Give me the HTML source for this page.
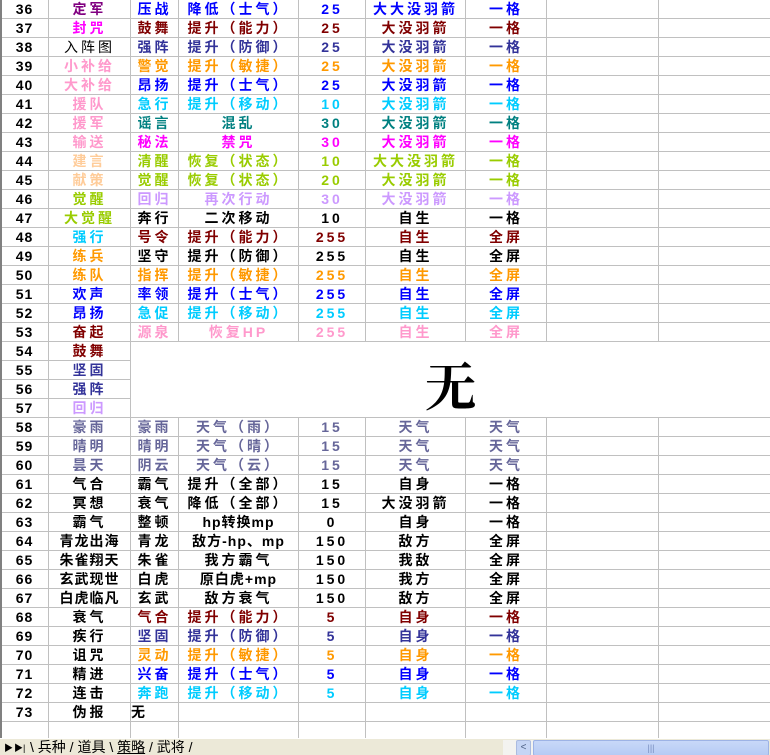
<!DOCTYPE html>
<html><head><meta charset="utf-8">
<style>
html,body{margin:0;padding:0;width:770px;height:755px;overflow:hidden;background:#fff;}
body{position:relative;font-family:"Liberation Sans","Noto Sans CJK SC",sans-serif;}
table{position:absolute;left:0;top:-1px;border-collapse:collapse;table-layout:fixed;width:770px;}
td{border:1px solid #c0c0c0;height:18px;padding:0;text-align:center;font-weight:bold;font-size:14px;line-height:18px;white-space:nowrap;overflow:hidden;letter-spacing:3px;}
td.n{letter-spacing:1px;color:#000;}
.pu{color:#800080}.mg{color:#ff00ff}.k{color:#000}.nv{color:#333399}.pk{color:#ff99cc}.or{color:#ff9900}.bl{color:#0000ff}.cy{color:#00ccff}.tl{color:#008080}.gr{color:#99cc00}.pe{color:#ffcc99}.lv{color:#cc99ff}.dr{color:#800000}.wg{color:#666699}
.big{font-size:52px;font-weight:bold;color:#000;letter-spacing:0;font-family:"Noto Serif CJK SC","Liberation Serif",serif;padding-top:8px;}
#lb{position:absolute;left:0;top:0;width:2px;height:738px;background:#808080;}
#tabs{position:absolute;left:0;top:738px;width:770px;height:17px;background:#ece9d8;border-top:1px solid #fff;font-size:14px;}
#tabs span{position:absolute;top:-2px;}
#sb{position:absolute;left:503px;top:740px;width:266px;height:15px;background:#f3f3f0;}
#sbl{position:absolute;left:13px;top:0;width:13px;height:14px;background:#c5d5f5;border:1px solid #aabbe0;border-radius:2px;color:#4d6185;font-size:10px;line-height:14px;text-align:center;}
#sbt{position:absolute;left:30px;top:0;width:234px;height:14px;background:linear-gradient(#c8d8f8,#b6cbf4);border:1px solid #9db3e5;border-radius:2px;color:#7a8fc0;font-size:9px;text-align:center;line-height:14px;}
</style></head><body>
<table>
<colgroup><col style="width:48px"><col style="width:82px"><col style="width:48px"><col style="width:120px"><col style="width:67px"><col style="width:100px"><col style="width:81px"><col style="width:112px"><col style="width:112px"></colgroup>
<tr><td class="n">36</td><td class="pu">定军</td><td class="bl">压战</td><td class="bl">降低（士气）</td><td class="bl">25</td><td class="bl">大大没羽箭</td><td class="bl">一格</td><td></td><td></td></tr>
<tr><td class="n">37</td><td class="mg">封咒</td><td class="dr">鼓舞</td><td class="dr">提升（能力）</td><td class="dr">25</td><td class="dr">大没羽箭</td><td class="dr">一格</td><td></td><td></td></tr>
<tr><td class="n">38</td><td class="k" style="font-weight:normal">入阵图</td><td class="nv">强阵</td><td class="nv">提升（防御）</td><td class="nv">25</td><td class="nv">大没羽箭</td><td class="nv">一格</td><td></td><td></td></tr>
<tr><td class="n">39</td><td class="pk">小补给</td><td class="or">警觉</td><td class="or">提升（敏捷）</td><td class="or">25</td><td class="or">大没羽箭</td><td class="or">一格</td><td></td><td></td></tr>
<tr><td class="n">40</td><td class="pk">大补给</td><td class="bl">昂扬</td><td class="bl">提升（士气）</td><td class="bl">25</td><td class="bl">大没羽箭</td><td class="bl">一格</td><td></td><td></td></tr>
<tr><td class="n">41</td><td class="pk">援队</td><td class="cy">急行</td><td class="cy">提升（移动）</td><td class="cy">10</td><td class="cy">大没羽箭</td><td class="cy">一格</td><td></td><td></td></tr>
<tr><td class="n">42</td><td class="pk">援军</td><td class="tl">谣言</td><td class="tl">混乱</td><td class="tl">30</td><td class="tl">大没羽箭</td><td class="tl">一格</td><td></td><td></td></tr>
<tr><td class="n">43</td><td class="pk">输送</td><td class="mg">秘法</td><td class="mg">禁咒</td><td class="mg">30</td><td class="mg">大没羽箭</td><td class="mg">一格</td><td></td><td></td></tr>
<tr><td class="n">44</td><td class="pe">建言</td><td class="gr">清醒</td><td class="gr">恢复（状态）</td><td class="gr">10</td><td class="gr">大大没羽箭</td><td class="gr">一格</td><td></td><td></td></tr>
<tr><td class="n">45</td><td class="pe">献策</td><td class="gr">觉醒</td><td class="gr">恢复（状态）</td><td class="gr">20</td><td class="gr">大没羽箭</td><td class="gr">一格</td><td></td><td></td></tr>
<tr><td class="n">46</td><td class="gr">觉醒</td><td class="lv">回归</td><td class="lv">再次行动</td><td class="lv">30</td><td class="lv">大没羽箭</td><td class="lv">一格</td><td></td><td></td></tr>
<tr><td class="n">47</td><td class="gr">大觉醒</td><td class="k">奔行</td><td class="k">二次移动</td><td class="k">10</td><td class="k">自生</td><td class="k">一格</td><td></td><td></td></tr>
<tr><td class="n">48</td><td class="cy">强行</td><td class="dr">号令</td><td class="dr">提升（能力）</td><td class="dr">255</td><td class="dr">自生</td><td class="dr">全屏</td><td></td><td></td></tr>
<tr><td class="n">49</td><td class="or">练兵</td><td class="k">坚守</td><td class="k">提升（防御）</td><td class="k">255</td><td class="k">自生</td><td class="k">全屏</td><td></td><td></td></tr>
<tr><td class="n">50</td><td class="or">练队</td><td class="or">指挥</td><td class="or">提升（敏捷）</td><td class="or">255</td><td class="or">自生</td><td class="or">全屏</td><td></td><td></td></tr>
<tr><td class="n">51</td><td class="bl">欢声</td><td class="bl">率领</td><td class="bl">提升（士气）</td><td class="bl">255</td><td class="bl">自生</td><td class="bl">全屏</td><td></td><td></td></tr>
<tr><td class="n">52</td><td class="bl">昂扬</td><td class="cy">急促</td><td class="cy">提升（移动）</td><td class="cy">255</td><td class="cy">自生</td><td class="cy">全屏</td><td></td><td></td></tr>
<tr><td class="n">53</td><td class="dr">奋起</td><td class="pk">源泉</td><td class="pk">恢复HP</td><td class="pk">255</td><td class="pk">自生</td><td class="pk">全屏</td><td></td><td></td></tr>
<tr><td class="n">54</td><td class="dr">鼓舞</td><td colspan="7" rowspan="4" class="big">无</td></tr>
<tr><td class="n">55</td><td class="nv">坚固</td></tr>
<tr><td class="n">56</td><td class="nv">强阵</td></tr>
<tr><td class="n">57</td><td class="lv">回归</td></tr>
<tr><td class="n">58</td><td class="wg">豪雨</td><td class="wg">豪雨</td><td class="wg">天气（雨）</td><td class="wg">15</td><td class="wg">天气</td><td class="wg">天气</td><td></td><td></td></tr>
<tr><td class="n">59</td><td class="wg">晴明</td><td class="wg">晴明</td><td class="wg">天气（晴）</td><td class="wg">15</td><td class="wg">天气</td><td class="wg">天气</td><td></td><td></td></tr>
<tr><td class="n">60</td><td class="wg">昙天</td><td class="wg">阴云</td><td class="wg">天气（云）</td><td class="wg">15</td><td class="wg">天气</td><td class="wg">天气</td><td></td><td></td></tr>
<tr><td class="n">61</td><td class="k">气合</td><td class="k">霸气</td><td class="k">提升（全部）</td><td class="k">15</td><td class="k">自身</td><td class="k">一格</td><td></td><td></td></tr>
<tr><td class="n">62</td><td class="k">冥想</td><td class="k">衰气</td><td class="k">降低（全部）</td><td class="k">15</td><td class="k">大没羽箭</td><td class="k">一格</td><td></td><td></td></tr>
<tr><td class="n">63</td><td class="k">霸气</td><td class="k">整顿</td><td class="k" style="letter-spacing:1px">hp转换mp</td><td class="k">0</td><td class="k">自身</td><td class="k">一格</td><td></td><td></td></tr>
<tr><td class="n">64</td><td class="k" style="letter-spacing:1px">青龙出海</td><td class="k">青龙</td><td class="k" style="letter-spacing:1px">敌方-hp、mp</td><td class="k">150</td><td class="k">敌方</td><td class="k">全屏</td><td></td><td></td></tr>
<tr><td class="n">65</td><td class="k" style="letter-spacing:1px">朱雀翔天</td><td class="k">朱雀</td><td class="k">我方霸气</td><td class="k">150</td><td class="k">我敌</td><td class="k">全屏</td><td></td><td></td></tr>
<tr><td class="n">66</td><td class="k" style="letter-spacing:1px">玄武现世</td><td class="k">白虎</td><td class="k" style="letter-spacing:1px">原白虎+mp</td><td class="k">150</td><td class="k">我方</td><td class="k">全屏</td><td></td><td></td></tr>
<tr><td class="n">67</td><td class="k" style="letter-spacing:1px">白虎临凡</td><td class="k">玄武</td><td class="k">敌方衰气</td><td class="k">150</td><td class="k">敌方</td><td class="k">全屏</td><td></td><td></td></tr>
<tr><td class="n">68</td><td class="k">衰气</td><td class="dr">气合</td><td class="dr">提升（能力）</td><td class="dr">5</td><td class="dr">自身</td><td class="dr">一格</td><td></td><td></td></tr>
<tr><td class="n">69</td><td class="k">疾行</td><td class="nv">坚固</td><td class="nv">提升（防御）</td><td class="nv">5</td><td class="nv">自身</td><td class="nv">一格</td><td></td><td></td></tr>
<tr><td class="n">70</td><td class="k">诅咒</td><td class="or">灵动</td><td class="or">提升（敏捷）</td><td class="or">5</td><td class="or">自身</td><td class="or">一格</td><td></td><td></td></tr>
<tr><td class="n">71</td><td class="k">精进</td><td class="bl">兴奋</td><td class="bl">提升（士气）</td><td class="bl">5</td><td class="bl">自身</td><td class="bl">一格</td><td></td><td></td></tr>
<tr><td class="n">72</td><td class="k">连击</td><td class="cy">奔跑</td><td class="cy">提升（移动）</td><td class="cy">5</td><td class="cy">自身</td><td class="cy">一格</td><td></td><td></td></tr>
<tr><td class="n">73</td><td class="k">伪报</td><td class="k" style="text-align:left">无</td><td></td><td></td><td></td><td></td><td></td><td></td></tr>
<tr><td></td><td></td><td></td><td></td><td></td><td></td><td></td><td></td><td></td></tr>
</table>
<div id="lb"></div>
<div id="tabs">
<span style="left:4px;font-size:9px;top:2px">▶</span>
<span style="left:14px;font-size:9px;top:2px">▶|</span>
<span style="left:30px">\ 兵种 / 道具 \ <u>策略</u> / 武将 /</span>
</div>
<div id="sb"><div id="sbl">&lt;</div><div id="sbt">|||</div></div>
</body></html>
